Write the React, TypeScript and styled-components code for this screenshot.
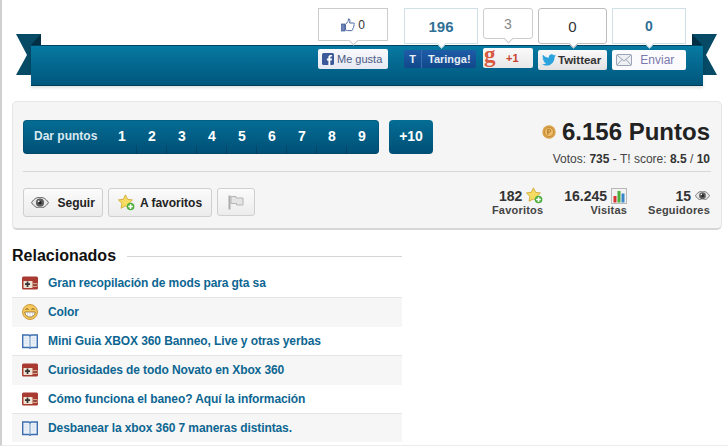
import React from "react";
import styled, { createGlobalStyle } from "styled-components";

const Global = createGlobalStyle`
  html, body { margin: 0; padding: 0; background: #fff; }
  body { font-family: "Liberation Sans", Arial, sans-serif; }
`;

const Page = styled.div`
  box-sizing: border-box;
  width: 728px;
  height: 446px;
  overflow: hidden;
  background: #fff;
  border-left: 2px solid #d0d0d0;
  border-bottom: 1px solid #ececec;
  margin: 0;
  padding-left: 10px;
`;

const Banner = styled.div`
  position: relative;
  width: 702px;
  height: 101px;
  margin-left: 4px;
  padding: 45px 15px 0 15px;
  box-sizing: border-box;
`;

const Tail = styled.svg<{ $side: "left" | "right" }>`
  position: absolute;
  top: 34px;
  ${(p) => (p.$side === "left" ? "left: 0;" : "right: 0;")}
`;

const Ribbon = styled.div`
  position: relative;
  height: 41px;
  box-sizing: border-box;
  display: flex;
  justify-content: flex-end;
  align-items: flex-end;
  padding-right: 17px;
  background: linear-gradient(#057ba3 0, #06729a 20%, #00567c 100%);
  border-top: 1px solid #00425f;
  border-bottom: 1px solid #003c56;
  box-shadow: 0 2px 3px rgba(0, 0, 0, 0.12);
`;

const ShareItem = styled.div<{ $bottom: number; $gap: number; $left: number }>`
  display: flex;
  flex-direction: column;
  margin-bottom: ${(p) => p.$bottom}px;
  margin-left: ${(p) => p.$left}px;
  gap: ${(p) => p.$gap}px;
  position: relative;
`;

const Counter = styled.div<{
  $w: number;
  $h: number;
  $color?: string;
  $size?: number;
  $bold?: boolean;
  $round?: boolean;
  $border?: string;
}>`
  position: relative;
  box-sizing: border-box;
  width: ${(p) => p.$w}px;
  height: ${(p) => p.$h}px;
  background: #fff;
  border: 1px solid ${(p) => p.$border ?? "#cfe0e6"};
  border-radius: ${(p) => (p.$round ? 3 : 0)}px;
  display: flex;
  align-items: center;
  justify-content: center;
  gap: 3px;
  color: ${(p) => p.$color ?? "#333"};
  font-size: ${(p) => p.$size ?? 14}px;
  font-weight: ${(p) => (p.$bold ? 700 : 400)};
  &::after {
    content: "";
    position: absolute;
    left: 50%;
    bottom: -4px;
    width: 6px;
    height: 6px;
    margin-left: -3px;
    background: #fff;
    border-right: 1px solid ${(p) => p.$border ?? "#cfe0e6"};
    border-bottom: 1px solid ${(p) => p.$border ?? "#cfe0e6"};
    transform: rotate(45deg);
  }
`;

const ShareButton = styled.div<{ $w: number; $h: number; $bg: string; $color: string; $size?: number; $weight?: number; $gap?: number }>`
  box-sizing: border-box;
  width: ${(p) => p.$w}px;
  height: ${(p) => p.$h}px;
  border-radius: 2px;
  background: ${(p) => p.$bg};
  color: ${(p) => p.$color};
  font-size: ${(p) => p.$size ?? 11}px;
  font-weight: ${(p) => p.$weight ?? 400};
  display: flex;
  align-items: center;
  gap: ${(p) => p.$gap ?? 2}px;
  padding-left: 4px;
  white-space: nowrap;
`;

const TaringaMark = styled.span`
  width: 17px;
  margin-left: -4px;
  text-align: center;
  border-right: 1px solid #3a6cb0;
  line-height: 18px;
  margin-right: 4px;
`;

const GoogleMark = styled.span`
  color: #d8593f;
  font: 700 23px/18px "Liberation Serif", serif;
  width: 20px;
  margin-left: -3px;
  height: 20px;
  margin-top: -5px;
`;

const Panel = styled.section`
  box-sizing: border-box;
  width: 710px;
  height: 129px;
  padding: 18px 10px 0 10px;
  background: #f5f5f5;
  border: 1px solid #e6e6e6;
  border-bottom: 2px solid #d6d6d6;
  border-radius: 5px;
`;

const TopRow = styled.div`
  display: flex;
  justify-content: space-between;
  height: 51px;
  border-bottom: 1px solid #d8d8d8;
`;

const BarGroup = styled.div`
  display: flex;
  gap: 10px;
  height: 34px;
`;

const PointsBar = styled.div`
  display: flex;
  height: 34px;
  width: 356px;
  border-radius: 4px;
  background: linear-gradient(#056d95, #004f75);
  box-shadow: inset 0 0 0 1px rgba(0, 50, 80, 0.25);
  overflow: hidden;
`;

const BarLabel = styled.div`
  width: 84px;
  box-sizing: border-box;
  padding-left: 11px;
  line-height: 32px;
  font-size: 12px;
  font-weight: 700;
  color: #dbe9f0;
  white-space: nowrap;
`;

const PointCell = styled.div<{ $last?: boolean }>`
  position: relative;
  box-sizing: border-box;
  width: ${(p) => (p.$last ? 32 : 30)}px;
  padding-right: ${(p) => (p.$last ? 2 : 0)}px;
  text-align: center;
  line-height: 33px;
  color: #fff;
  font-size: 14px;
  font-weight: 700;
  &::after {
    content: "";
    display: ${(p) => (p.$last ? "none" : "block")};
    position: absolute;
    right: 0;
    bottom: 0;
    width: 1px;
    height: 12px;
    background: linear-gradient(rgba(0, 50, 80, 0), #003b5c);
  }
`;

const PlusTen = styled.div`
  width: 44px;
  height: 34px;
  border-radius: 4px;
  background: linear-gradient(#056d95, #004f75);
  text-align: center;
  line-height: 33px;
  color: #fff;
  font-size: 14px;
  font-weight: 700;
`;

const Score = styled.div`
  display: flex;
  flex-direction: column;
  align-items: flex-end;
  margin-right: 1px;
`;

const PointsTotal = styled.div`
  display: flex;
  align-items: center;
  gap: 6px;
  height: 24px;
  color: #222;
  font-size: 24px;
  font-weight: 700;
  white-space: nowrap;
`;

const VoteLine = styled.div`
  margin-top: 8px;
  font-size: 12px;
  line-height: 14px;
  color: #444;
  b { color: #333; }
`;

const BottomRow = styled.div`
  display: flex;
  justify-content: space-between;
  padding-top: 16px;
`;

const Actions = styled.div`
  display: flex;
  gap: 5px;
  align-items: flex-start;
`;

const ActionButton = styled.div<{ $w: number; $h?: number }>`
  box-sizing: border-box;
  width: ${(p) => p.$w}px;
  height: ${(p) => p.$h ?? 29}px;
  display: flex;
  align-items: center;
  justify-content: center;
  gap: 5px;
  background: linear-gradient(#fbfbfb, #ececec);
  border: 1px solid #cfcfcf;
  border-radius: 3px;
  color: #222;
  font-size: 12px;
  font-weight: 700;
  white-space: nowrap;
`;

const Stats = styled.div`
  display: flex;
  gap: 21px;
  margin-top: -1px;
  margin-right: 1px;
`;

const Stat = styled.div`
  display: flex;
  flex-direction: column;
  align-items: flex-end;
`;

const StatValue = styled.div`
  display: flex;
  align-items: center;
  gap: 4px;
  height: 17px;
  color: #333;
  font-size: 14px;
  font-weight: 700;
`;

const StatLabel = styled.div`
  color: #444;
  font-size: 11px;
  line-height: 13px;
  font-weight: 700;
  letter-spacing: 0.2px;
`;

const Related = styled.section`
  width: 390px;
  margin-top: 16px;
`;

const RelatedHead = styled.div`
  display: flex;
  align-items: center;
  gap: 11px;
  height: 20px;
  color: #111;
  font-size: 16px;
  font-weight: 700;
  &::after {
    content: "";
    flex: 1;
    height: 1px;
    background: #d5d5d5;
  }
`;

const RelatedList = styled.ul`
  list-style: none;
  margin: 2px 0 0;
  padding: 0;
`;

const RelatedRow = styled.li<{ $alt: boolean }>`
  box-sizing: border-box;
  height: 29px;
  display: flex;
  align-items: center;
  gap: 10px;
  padding-left: 10px;
  background: ${(p) => (p.$alt ? "#f6f6f6" : "#fff")};
  border-top: 1px solid ${(p) => (p.$alt ? "#e5e5e5" : "#f6f6f6")};
  color: #0d6692;
  font-size: 12px;
  font-weight: 700;
  letter-spacing: -0.1px;
  white-space: nowrap;
  &:first-child { border-top: 0; }
`;

const TailShape = ({ side }: { side: "left" | "right" }) =>
  side === "left" ? (
    <Tail $side="left" width="26" height="42" viewBox="0 0 26 42">
      <polygon points="0,0 25,0 25,11 15,11 15,41 0,41 11,21" fill="#064a66" />
      <polygon points="15,11 25,11 25,0" fill="#022f44" />
    </Tail>
  ) : (
    <Tail $side="right" width="26" height="42" viewBox="0 0 26 42">
      <polygon points="0,0 25,0 14,21 25,41 10,41 10,11 0,11" fill="#064a66" />
      <polygon points="0,0 0,11 10,11" fill="#022f44" />
    </Tail>
  );

const ThumbIcon = () => (
  <svg width="14" height="14" viewBox="0 0 14 14">
    <rect x="0.5" y="6" width="3.5" height="7" fill="#6d84b4" stroke="#3b5998" strokeWidth="0.7" />
    <path d="M4.5 6.5 L7 3.5 L7.5 0.8 C9 0.8 9.3 2.5 8.6 5 L12.6 5 C13.6 5 13.5 6.6 12.8 6.8 C13.4 7.4 13.1 8.6 12.4 8.7 C12.8 9.4 12.4 10.3 11.8 10.5 C12 11.4 11.5 12.6 10.6 12.6 L6.5 12.6 L4.5 11.8 Z" fill="#fff" stroke="#3b5998" strokeWidth="0.9" />
  </svg>
);

const FbIcon = () => (
  <svg width="12" height="12" viewBox="0 0 12 12">
    <rect width="12" height="12" rx="1.5" fill="#3b5998" />
    <path d="M8.3 12 V7.4 H9.8 L10 5.6 H8.3 V4.5 C8.3 4 8.5 3.6 9.2 3.6 H10.1 V2 C9.8 2 9.3 1.9 8.7 1.9 C7.3 1.9 6.4 2.7 6.4 4.3 V5.6 H4.9 V7.4 H6.4 V12 Z" fill="#fff" />
  </svg>
);

const TwitterIcon = () => (
  <svg width="14" height="12" viewBox="0 0 24 20">
    <path d="M24 2.4c-.9.4-1.8.7-2.8.8 1-.6 1.8-1.6 2.2-2.7-1 .6-2 1-3.1 1.2C19.3.7 18 .1 16.6.1c-2.7 0-4.9 2.2-4.9 4.9 0 .4 0 .8.1 1.1C7.7 5.9 4.1 3.9 1.7.9 1.2 1.7 1 2.5 1 3.4c0 1.7.9 3.2 2.2 4.1-.8 0-1.6-.2-2.2-.6v.1c0 2.4 1.7 4.4 3.9 4.8-.7.2-1.5.2-2.2.1.6 2 2.4 3.4 4.6 3.4-1.7 1.3-3.8 2.1-6.1 2.1-.4 0-.8 0-1.2-.1 2.2 1.4 4.8 2.2 7.5 2.2 9.1 0 14-7.5 14-14v-.6c1-.7 1.8-1.6 2.5-2.5z" fill="#2aa3dc" />
  </svg>
);

const MailIcon = () => (
  <svg width="16" height="12" viewBox="0 0 16 12">
    <rect x="0.5" y="0.5" width="15" height="11" rx="1" fill="#eef0f4" stroke="#9aa3b5" />
    <path d="M1 1 L8 7 L15 1 M1 11 L6 5.5 M15 11 L10 5.5" fill="none" stroke="#9aa3b5" />
  </svg>
);

const CoinIcon = () => (
  <svg width="14" height="14" viewBox="0 0 14 14">
    <circle cx="7" cy="7" r="6.7" fill="#d9a24a" />
    <circle cx="7" cy="7" r="4.6" fill="#eebc65" stroke="#b9812c" strokeWidth="0.7" />
    <path d="M5.8 9.8 V4.4 H7.6 C9 4.4 9 7 7.6 7 H5.8" fill="none" stroke="#a8742a" strokeWidth="1" />
  </svg>
);

const EyeIcon = ({ size = 16 }: { size?: number }) => (
  <svg width={size} height={(size * 10) / 16} viewBox="0 0 16 10">
    <path d="M0.5 5 C3 1 5.5 0.3 8 0.3 C10.5 0.3 13 1 15.5 5 C13 9 10.5 9.7 8 9.7 C5.5 9.7 3 9 0.5 5 Z" fill="#e8e8e8" stroke="#555" strokeWidth="0.8" />
    <circle cx="8" cy="5" r="3.6" fill="#5c5c5c" />
    <circle cx="8" cy="5" r="1.5" fill="#222" />
    <circle cx="6.8" cy="3.8" r="0.8" fill="#fff" />
  </svg>
);

const StarPlusIcon = () => (
  <svg width="17" height="17" viewBox="0 0 16 16">
    <path d="M7 0.8 L9 5 L13.6 5.6 L10.3 8.8 L11.1 13.4 L7 11.2 L2.9 13.4 L3.7 8.8 L0.4 5.6 L5 5 Z" fill="#f6dc63" stroke="#d2ae3f" strokeWidth="0.9" strokeLinejoin="round" />
    <circle cx="11.8" cy="11.8" r="3.6" fill="#4eae3c" />
    <path d="M11.8 9.6 V14 M9.6 11.8 H14" stroke="#fff" strokeWidth="1.5" />
  </svg>
);

const ChartIcon = () => (
  <svg width="16" height="16" viewBox="0 0 16 16">
    <rect x="0.5" y="0.5" width="15" height="15" fill="#f2f2f2" stroke="#b8b8b8" />
    <rect x="2.5" y="8" width="3" height="6.5" fill="#d5352e" />
    <rect x="6.5" y="3" width="3" height="11.5" fill="#4eae3c" />
    <rect x="10.5" y="5.5" width="3" height="9" fill="#3a86c8" />
  </svg>
);

const FlagIcon = () => (
  <svg width="16" height="15" viewBox="0 0 16 15">
    <path d="M1.5 0.5 V14.5" stroke="#aaa" strokeWidth="2" />
    <path d="M3 1.5 H8 V3 H15 V10 H8.5 V8.5 H3 Z" fill="#e4e4e4" stroke="#b5b5b5" />
  </svg>
);

const GameIcon = () => (
  <svg width="16" height="14" viewBox="0 0 16 14">
    <rect x="0" y="0.5" width="16" height="13" rx="1.5" fill="#a83a32" />
    <rect x="1.5" y="5" width="9" height="7" fill="#eee3d2" />
    <rect x="10.5" y="7" width="5" height="4" fill="#d9a48e" />
    <path d="M5.5 5.5 V11 M3 8.2 H8" stroke="#333" strokeWidth="1.7" />
    <path d="M11 9 H15" stroke="#7a2820" strokeWidth="1.4" />
  </svg>
);

const SmileIcon = () => (
  <svg width="16" height="16" viewBox="0 0 16 16">
    <circle cx="8" cy="8" r="7.5" fill="#f6c85a" stroke="#c99a3d" />
    <path d="M3.5 5.5 Q5 3.8 6.5 5.5 M9.5 5.5 Q11 3.8 12.5 5.5" stroke="#7a5a20" fill="none" />
    <path d="M2.8 8 H13.2 C13 11.5 10.8 13 8 13 C5.2 13 3 11.5 2.8 8 Z" fill="#fff" stroke="#8a6a25" strokeWidth="0.8" />
    <path d="M5.5 8 V12.5 M8 8 V13 M10.5 8 V12.5" stroke="#bbb" strokeWidth="0.6" />
  </svg>
);

const BookIcon = () => (
  <svg width="16" height="15" viewBox="0 0 16 15">
    <path d="M0.7 1 H7 L8 2 L9 1 H15.3 V13.5 H9 L8 14.3 L7 13.5 H0.7 Z" fill="#eaf0f7" stroke="#3d6fb0" strokeWidth="1.4" />
    <path d="M8 2 V14" stroke="#6f93c0" />
    <path d="M2.5 4 H6 M2.5 6.5 H6 M2.5 9 H6 M10 4 H13.5 M10 6.5 H13.5 M10 9 H13.5" stroke="#d3deeb" strokeWidth="0.8" />
  </svg>
);

const related: { icon: React.ReactNode; title: string }[] = [
  { icon: <GameIcon />, title: "Gran recopilación de mods para gta sa" },
  { icon: <SmileIcon />, title: "Color" },
  { icon: <BookIcon />, title: "Mini Guia XBOX 360 Banneo, Live y otras yerbas" },
  { icon: <GameIcon />, title: "Curiosidades de todo Novato en Xbox 360" },
  { icon: <GameIcon />, title: "Cómo funciona el baneo? Aquí la información" },
  { icon: <BookIcon />, title: "Desbanear la xbox 360 7 maneras distintas." },
];

export default function App() {
  return (
    <Page>
      <Global />
      <Banner>
        <TailShape side="left" />
        <TailShape side="right" />
        <Ribbon>
          <ShareItem $bottom={16} $gap={8} $left={0}>
            <Counter $w={70} $h={33} $border="#cccccc" $size={12}>
              <ThumbIcon />0
            </Counter>
            <ShareButton $w={70} $h={20} $bg="linear-gradient(#f8f9fc,#e6e9f2)" $color="#4a5a85" $gap={3}>
              <FbIcon />
              Me gusta
            </ShareButton>
          </ShareItem>
          <ShareItem $bottom={17} $gap={6} $left={16}>
            <Counter $w={74} $h={36} $color="#2f7096" $size={15} $bold>
              196
            </Counter>
            <ShareButton $w={72} $h={18} $bg="linear-gradient(#1f5ca8,#11488a)" $color="#e8eef7" $size={11} $weight={700}>
              <TaringaMark>T</TaringaMark>
              Taringa!
            </ShareButton>
          </ShareItem>
          <ShareItem $bottom={17} $gap={9} $left={5}>
            <Counter $w={50} $h={31} $round $border="#cccccc" $color="#888" $size={14}>
              3
            </Counter>
            <ShareButton $w={50} $h={20} $bg="linear-gradient(#fafafa,#e8e8e8)" $color="#c9402f" $size={11} $weight={700}>
              <GoogleMark>g</GoogleMark>+1
            </ShareButton>
          </ShareItem>
          <ShareItem $bottom={15} $gap={6} $left={5}>
            <Counter $w={69} $h={36} $round $border="#bdbdbd" $color="#333" $size={15}>
              0
            </Counter>
            <ShareButton $w={69} $h={20} $bg="linear-gradient(#fafafa,#e2e2e2)" $color="#333" $size={11.5} $weight={700}>
              <TwitterIcon />
              Twittear
            </ShareButton>
          </ShareItem>
          <ShareItem $bottom={15} $gap={6} $left={5}>
            <Counter $w={74} $h={36} $color="#2f7096" $size={14} $bold>
              0
            </Counter>
            <ShareButton $w={74} $h={20} $bg="#fbfbfe" $color="#7b78ad" $size={12} $gap={5}>
              <MailIcon />
              &nbsp;Enviar
            </ShareButton>
          </ShareItem>
        </Ribbon>
      </Banner>
      <Panel>
        <TopRow>
          <BarGroup>
            <PointsBar>
              <BarLabel>Dar puntos</BarLabel>
              {[1, 2, 3, 4, 5, 6, 7, 8, 9].map((n) => (
                <PointCell key={n} $last={n === 9}>
                  {n}
                </PointCell>
              ))}
            </PointsBar>
            <PlusTen>+10</PlusTen>
          </BarGroup>
          <Score>
            <PointsTotal>
              <CoinIcon />
              6.156 Puntos
            </PointsTotal>
            <VoteLine>
              Votos: <b>735</b> - T! score: <b>8.5</b> / <b>10</b>
            </VoteLine>
          </Score>
        </TopRow>
        <BottomRow>
          <Actions>
            <ActionButton $w={80}>
              <EyeIcon size={18} />
              &nbsp;Seguir
            </ActionButton>
            <ActionButton $w={104}>
              <StarPlusIcon />
              A favoritos
            </ActionButton>
            <ActionButton $w={38} $h={28}>
              <FlagIcon />
            </ActionButton>
          </Actions>
          <Stats>
            <Stat>
              <StatValue>
                182
                <StarPlusIcon />
              </StatValue>
              <StatLabel>Favoritos</StatLabel>
            </Stat>
            <Stat>
              <StatValue>
                16.245
                <ChartIcon />
              </StatValue>
              <StatLabel>Visitas</StatLabel>
            </Stat>
            <Stat>
              <StatValue>
                15
                <EyeIcon size={15} />
              </StatValue>
              <StatLabel>Seguidores</StatLabel>
            </Stat>
          </Stats>
        </BottomRow>
      </Panel>
      <Related>
        <RelatedHead>Relacionados</RelatedHead>
        <RelatedList>
          {related.map((r, i) => (
            <RelatedRow key={r.title} $alt={i % 2 === 1}>
              {r.icon}
              {r.title}
            </RelatedRow>
          ))}
        </RelatedList>
      </Related>
    </Page>
  );
}
